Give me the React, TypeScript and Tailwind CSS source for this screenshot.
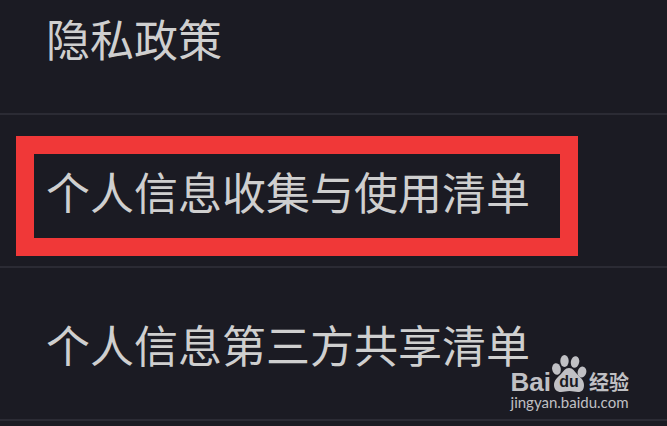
interface PolicyItem {
  id: string;
  title: string;
  highlighted?: boolean;
}

const items: PolicyItem[] = [
  { id: "collection", title: "个人信息收集与使用清单", highlighted: true },
  { id: "sharing", title: "个人信息第三方共享清单" },
];

function PawLogo() {
  return (
    <svg className="h-[37px] w-9" viewBox="0 0 36 37" fill="currentColor" aria-hidden="true">
      <ellipse cx="5.500" cy="14" rx="4.300" ry="5.800" transform="rotate(-12 5.5 14)" />
      <ellipse cx="13.500" cy="6" rx="4.200" ry="6" />
      <ellipse cx="24" cy="7" rx="4.200" ry="5.800" transform="rotate(12 24 7)" />
      <ellipse cx="31" cy="17" rx="4.300" ry="5.500" transform="rotate(14 31 17)" />
      <path d="M18 13c-4 0-5.500 3.500-8 6-3.500 3.500-7 6-7 11 0 4.500 3 7 7 7 3.500 0 5-1 8.500-1s5 1 8.500 1c4 0 6-2.500 6-7 0-5-3.500-7.500-7-11-2.500-2.500-4-6-8-6z" />
    </svg>
  );
}

function Watermark() {
  return (
    <div className="absolute right-[38px] bottom-3.5 text-[#c0c0c4]">
      <div className="flex h-[37px] items-end">
        <span className="font-['Liberation_Sans'] text-[26px] leading-5 font-bold">Bai</span>
        <span className="relative">
          <PawLogo />
          <span className="absolute inset-x-0 bottom-0 text-center font-['Liberation_Sans'] text-base leading-5 font-bold text-[#1b1b23]">
            du
          </span>
        </span>
        <span className="pl-0.5 font-['Noto_Sans_CJK_SC',sans-serif] text-xl leading-5 font-bold">经验</span>
      </div>
      <p className="font-['Lato',sans-serif] text-[15px] leading-5">jingyan.baidu.com</p>
    </div>
  );
}

export default function App() {
  return (
    <main className="relative min-h-screen overflow-hidden bg-[#1b1b23] font-['Noto_Sans_CJK_SC',sans-serif] text-[44px] leading-[48px] text-[#cfcfcf]">
      <ul>
        <li className="border-b-2 border-[#2b2b34]">
          <button className="block w-full px-[46px] pt-3.5 pb-[51px] text-left">隐私政策</button>
        </li>
        {items.map((item) => (
          <li key={item.id} className="relative border-b-2 border-[#2b2b34]">
            <button className="block w-full px-[46px] pt-[52px] pb-[51px] text-left">{item.title}</button>
            {item.highlighted && (
              <span className="pointer-events-none absolute top-[21px] left-4 h-[120px] w-[562px] border-[18px] border-[#f03838]" />
            )}
          </li>
        ))}
      </ul>
      <Watermark />
    </main>
  );
}
